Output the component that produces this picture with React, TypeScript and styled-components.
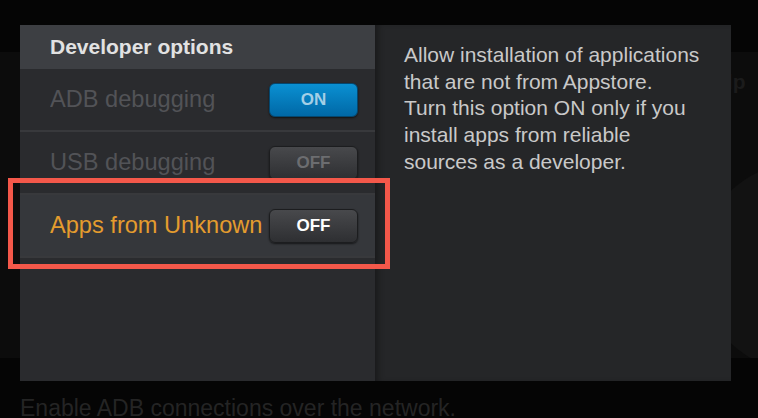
import React from "react";
import styled, { createGlobalStyle } from "styled-components";

const GlobalStyle = createGlobalStyle`
  html, body {
    margin: 0;
    padding: 0;
    background: #050505;
  }
  body {
    font-family: "Liberation Sans", Arial, sans-serif;
  }
`;

const Screen = styled.div`
  position: relative;
  width: 758px;
  height: 418px;
  overflow: hidden;
  background: #050505;
`;

const Backdrop = styled.div`
  margin-top: 52px;
  height: 306px;
  background: #0c0c0c;
  display: flex;
  justify-content: flex-end;
  position: relative;
  overflow: hidden;
`;

const BackdropLabel = styled.div`
  padding: 18px 0 0;
  width: 58px;
  font-size: 21px;
  font-weight: bold;
  color: #1b1b1b;
`;

const Ring = styled.div`
  position: absolute;
  right: -150px;
  top: 110px;
  width: 210px;
  height: 210px;
  border-radius: 50%;
  background: #121212;
`;

const Footer = styled.div`
  margin-top: 36px;
  padding-left: 20px;
  font-size: 23px;
  line-height: 28px;
  color: #242424;
  white-space: nowrap;
`;

const Dialog = styled.div`
  position: absolute;
  left: 20px;
  top: 25px;
  width: 711px;
  height: 356px;
  display: grid;
  grid-template-columns: 355px 1fr;
  background: #252628;
`;

const Menu = styled.div`
  display: flex;
  flex-direction: column;
  background: #2a2b2e;
`;

const Header = styled.div`
  height: 44px;
  display: flex;
  align-items: center;
  padding-left: 30px;
  background: #3d3f43;
  color: #e2e2e2;
  font-size: 21px;
  font-weight: bold;
`;

const Row = styled.div<{ $focused?: boolean }>`
  height: 61px;
  display: flex;
  align-items: center;
  padding: 0 17px 0 30px;
  border-bottom: 2px solid #38393c;
  background: ${(p) => (p.$focused ? "#35373b" : "transparent")};
`;

const RowLabel = styled.div<{ $focused?: boolean }>`
  flex: 1;
  min-width: 0;
  overflow: hidden;
  white-space: nowrap;
  text-overflow: clip;
  font-size: 23.6px;
  color: ${(p) => (p.$focused ? "#e49c2e" : "#525357")};
`;

const Toggle = styled.div<{ $on?: boolean; $focused?: boolean }>`
  flex: none;
  width: 89px;
  height: 34px;
  margin-left: 4px;
  box-sizing: border-box;
  border-radius: 6px;
  display: flex;
  align-items: center;
  justify-content: center;
  font-size: 17px;
  font-weight: bold;
  border: 1px solid ${(p) => (p.$on ? "#04476f" : "#1c1d1f")};
  background: ${(p) =>
    p.$on
      ? "linear-gradient(#0a90d2, #0068a6)"
      : "linear-gradient(#48494c, #2e2f32)"};
  color: ${(p) => (p.$on ? "#a4cfe6" : p.$focused ? "#ffffff" : "#6c6d70")};
  box-shadow: 0 1px 2px rgba(0, 0, 0, 0.6);
`;

const Info = styled.div`
  padding: 17px 30px 0 29px;
  font-size: 21px;
  line-height: 26.7px;
  color: #c9c9c9;
  box-shadow: inset 6px 0 6px -3px rgba(0, 0, 0, 0.35);
`;

const Highlight = styled.div`
  position: absolute;
  left: 8px;
  top: 178px;
  width: 382px;
  height: 91px;
  box-sizing: border-box;
  border: 5px solid #f4584a;
  pointer-events: none;
`;

const options = [
  { label: "ADB debugging", on: true },
  { label: "USB debugging", on: false },
  { label: "Apps from Unknown Sources", on: false, focused: true },
];

export default function App() {
  return (
    <Screen>
      <GlobalStyle />
      <Backdrop>
        <Ring />
        <BackdropLabel>Help</BackdropLabel>
      </Backdrop>
      <Footer>Enable ADB connections over the network.</Footer>
      <Dialog>
        <Menu>
          <Header>Developer options</Header>
          {options.map((o) => (
            <Row key={o.label} $focused={o.focused}>
              <RowLabel $focused={o.focused}>{o.label}</RowLabel>
              <Toggle $on={o.on} $focused={o.focused}>
                {o.on ? "ON" : "OFF"}
              </Toggle>
            </Row>
          ))}
        </Menu>
        <Info>
          Allow installation of applications
          <br />
          that are not from Appstore.
          <br />
          Turn this option ON only if you
          <br />
          install apps from reliable
          <br />
          sources as a developer.
        </Info>
      </Dialog>
      <Highlight />
    </Screen>
  );
}
